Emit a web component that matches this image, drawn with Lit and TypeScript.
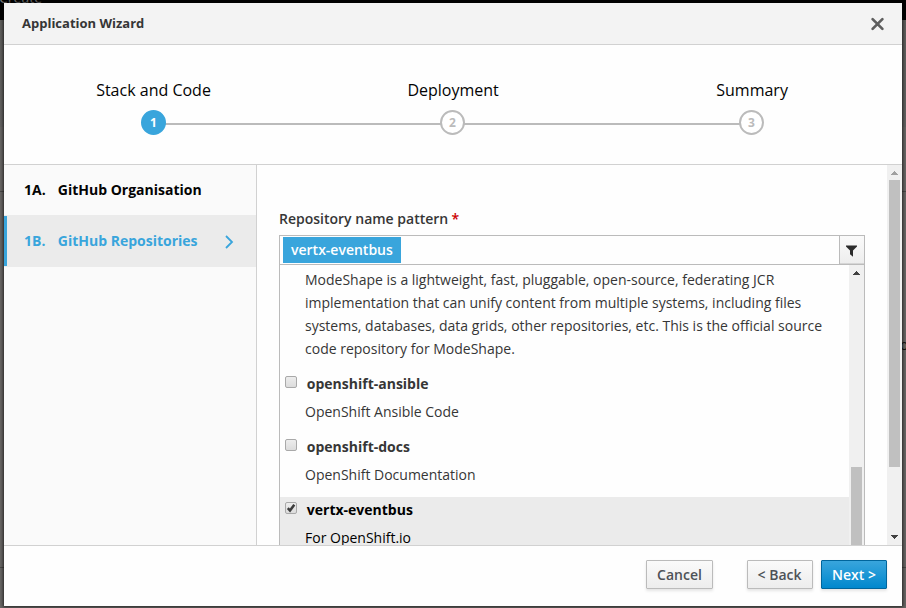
import { LitElement, html, css, svg } from "lit";
import { customElement, property } from "lit/decorators.js";
import { classMap } from "lit/directives/class-map.js";

const arrowUp = html`<svg width="7" height="4" viewBox="0 0 7 4" shape-rendering="crispEdges"><path fill="currentColor" d="M3 0h1v1h1v1h1v1h1v1H0V3h1V2h1V1h1z" /></svg>`;
const arrowDown = html`<svg width="7" height="4" viewBox="0 0 7 4" shape-rendering="crispEdges"><path fill="currentColor" d="M0 0h7v1H6v1H5v1H4v1H3V3H2V2H1V1H0z" /></svg>`;
const tick = svg`<path d="M2.8 6.2L5 8.6L9.3 2.8" fill="none" stroke="#3c3c3c" stroke-width="2.5" />`;

@customElement("wizard-step")
export class WizardStep extends LitElement {
  @property({ type: Number }) number = 1;
  @property() label = "";
  @property({ type: Boolean }) active = false;

  static styles = css`
    :host { display: flex; flex-direction: column; align-items: center; }
    .label { font-size: 16px; line-height: 24px; color: #030303; white-space: nowrap; }
    .label.pending { padding-left: 1.2px; }
    .circle {
      box-sizing: border-box; width: 25px; height: 25px; margin-top: 8px; z-index: 1;
      border: 2px solid #bbb; border-radius: 50%; background: #fff; color: #bbb;
      font-size: 12px; font-weight: 700; line-height: 21px; text-align: center;
    }
    .circle.active { background: #39a5dc; border-color: #39a5dc; color: #fff; }
  `;

  render() {
    return html`
      <span class=${classMap({ label: true, pending: !this.active })}>${this.label}</span>
      <span class=${classMap({ circle: true, active: this.active })}>${this.number}</span>
    `;
  }
}

@customElement("repo-item")
export class RepoItem extends LitElement {
  @property() name = "";
  @property() description = "";
  @property({ type: Boolean }) checked = false;

  static styles = css`
    :host { display: block; }
    .item { height: 63px; padding-left: 5px; box-sizing: border-box; color: #363636; }
    .item.checked { background: #ebebeb; color: #000; }
    .title { display: flex; gap: 9.8px; font-weight: 700; line-height: 26px; }
    .box {
      box-sizing: border-box; width: 12px; height: 12px; margin-top: 5px; border: 1px solid #a9a9a9;
      border-radius: 2px; background: linear-gradient(#ededed, #dcdcdc); flex: none;
    }
    .box svg { display: block; margin: -1px; }
    .text { padding: 3px 0 0 20px; line-height: 23px; }
  `;

  render() {
    return html`<div class=${classMap({ item: true, checked: this.checked })}>
      <div class="title">
        <span class="box"><svg width="12" height="12" viewBox="0 0 12 12">${this.checked ? tick : ""}</svg></span>
        <span>${this.name}</span>
      </div>
      <div class="text">${this.description}</div>
    </div>`;
  }
}

@customElement("app-root")
export class AppRoot extends LitElement {
  static styles = css`
    * { box-sizing: border-box; }
    :host {
      display: block; position: relative; width: 906px; height: 608px; overflow: hidden;
      font: 14px/23px "Open Sans", "Noto Sans", sans-serif; color: #363636;
      background: linear-gradient(#020202 20px, #5f5e5c 20px, #636261 127px, #686664 127px);
    }
    .behind { position: absolute; color: #777; line-height: 16px; }
    .create { left: -1px; top: -10px; font-size: 14px; }
    .edge { left: 900px; top: 337px; color: #111; }
    .rule { position: absolute; left: 0; width: 906px; height: 1px; background: #484746; }
    .rule.upper { top: 191px; }
    .rule.lower { top: 567px; }
    .modal {
      position: absolute; left: 4px; top: 3px; width: 898px; height: 603px;
      display: flex; flex-direction: column; background: #fefefe;
      box-shadow: 0 0 3px 1px rgba(0, 0, 0, 0.65);
    }
    .header {
      height: 42px; flex: none; display: flex; align-items: center; justify-content: space-between;
      padding: 0 17px 0 18px; background: #f3f3f3; border-bottom: 1px solid #d1d1d1;
      font-size: 13px; font-weight: 700;
    }
    .steps {
      height: 120px; flex: none; position: relative; border-bottom: 1px solid #d1d1d1;
      display: grid; grid-template-columns: repeat(3, 299px); padding-top: 33px; justify-content: start;
    }
    .steps wizard-step { position: relative; }
    .line { position: absolute; left: 149px; top: 78px; width: 598px; height: 2px; background: #bbb; }
    .body { height: 380px; flex: none; display: flex; overflow: hidden; }
    .side { width: 253px; flex: none; background: #fafafa; border-right: 1px solid #d1d1d1; }
    .nav { display: flex; align-items: center; font-weight: 700; color: #030303; padding: 0 0 2px 20px; height: 50px; }
    .nav .id { width: 33.8px; }
    .nav.current { height: 52px; background: #ebebeb; color: #39a5dc; padding: 0; }
    .nav.current .bar { width: 3px; height: 50px; background: #39a5dc; margin-right: 17px; }
    .nav.current .id, .nav.current .name { padding-bottom: 2px; }
    .nav.current .name { flex: 1; }
    .nav.current svg { margin: 2px 22.5px 0 0; }
    .main { flex: 1; padding: 42px 22px 0; }
    .label { font-weight: 600; line-height: 24px; margin-bottom: 4px; }
    .req { color: #cc0000; margin-left: -0.5px; }
    .input { display: flex; height: 30px; border: 1px solid #bbb; justify-content: space-between; }
    .tag { height: 26px; margin: 1px 0 0 3px; padding: 0 8px; background: #39a5dc; color: #fff; font-weight: 600; line-height: 26px; }
    .filter {
      width: 25px; display: flex; align-items: center; justify-content: center; border-left: 1px solid #bbb;
      padding: 1px 1px 0 0; background: linear-gradient(#fafafa, #ededed); box-shadow: inset 0 -1px #d5d5d5;
    }
    .list { display: flex; height: 281px; border: solid #bbb; border-width: 0 1px; overflow: hidden; }
    .rows { flex: 1; }
    .intro { padding: 3px 20px 11px 25px; white-space: nowrap; height: 106px; }
    .scroll { width: 15px; flex: none; background: #f0f0f0; display: flex; flex-direction: column; align-items: center; }
    .scroll svg { display: block; flex: none; }
    .inner { color: #404040; padding-top: 6px; }
    .inner .thumb { width: 11px; height: 90px; margin-top: 192px; background: #c0c0c0; flex: none; }
    .outer { height: 380px; padding: 6px 0; }
    .outer .up { color: #a0a0a0; }
    .outer .down { color: #404040; margin-top: auto; }
    .outer .thumb { width: 11px; height: 287px; margin-top: 5px; background: #c0c0c0; flex: none; }
    .footer {
      height: 61px; flex: none; border-top: 1px solid #d1d1d1; display: flex;
      justify-content: flex-end; padding: 14px 15px 0 0;
    }
    .btn {
      height: 29px; border: 1px solid #bbb; border-radius: 1px; color: #4d5258; font: inherit; font-weight: 600;
      line-height: 27px; padding: 0; width: 66px; margin-left: 8px; text-align: center;
      background: linear-gradient(#fafafa, #ededed); box-shadow: 0 2px 3px rgba(3, 3, 3, 0.1);
    }
    .btn.cancel { width: 67px; margin-right: 26px; }
    .btn.back { padding-right: 1px; }
    .btn.primary { color: #fff; border-color: #00659c; background: linear-gradient(#39a5dc, #0088ce); }
  `;

  render() {
    return html`
      <span class="behind create">Create</span>
      <span class="behind edge">o</span>
      <div class="rule upper"></div>
      <div class="rule lower"></div>
      <section class="modal">
        <header class="header">
          <span>Application Wizard</span>
          <svg width="15" height="14" viewBox="0 0 15 14"><path d="M2.6 2.1L12.4 11.9M12.4 2.1L2.6 11.9" stroke="#5e5e5e" stroke-width="2.7" stroke-linecap="round" /></svg>
        </header>
        <div class="steps">
          <div class="line"></div>
          <wizard-step number="1" label="Stack and Code" active></wizard-step>
          <wizard-step number="2" label="Deployment"></wizard-step>
          <wizard-step number="3" label="Summary"></wizard-step>
        </div>
        <div class="body">
          <nav class="side">
            <div class="nav"><span class="id">1A.</span><span>GitHub Organisation</span></div>
            <div class="nav current">
              <span class="bar"></span><span class="id">1B.</span><span class="name">GitHub Repositories</span>
              <svg width="10" height="14" viewBox="0 0 10 14"><path d="M2 1L8 7L2 13" fill="none" stroke="#39a5dc" stroke-width="1.8" /></svg>
            </div>
          </nav>
          <main class="main">
            <div class="label">Repository name pattern <span class="req">*</span></div>
            <div class="input">
              <span class="tag">vertx-eventbus</span>
              <span class="filter">
                <svg width="11" height="12" viewBox="0 0 11 12"><path d="M0 0.5H11V1.5L7 5.6V11.7L4 9.2V5.6L0 1.5Z" fill="#2b2b2b" /></svg>
              </span>
            </div>
            <div class="list">
              <div class="rows">
                <div class="intro">
                  ModeShape is a lightweight, fast, pluggable, open-source, federating JCR<br />
                  implementation that can unify content from multiple systems, including files<br />
                  systems, databases, data grids, other repositories, etc. This is the official source<br />
                  code repository for ModeShape.
                </div>
                <repo-item name="openshift-ansible" description="OpenShift Ansible Code"></repo-item>
                <repo-item name="openshift-docs" description="OpenShift Documentation"></repo-item>
                <repo-item name="vertx-eventbus" description="For OpenShift.io" checked></repo-item>
              </div>
              <div class="scroll inner">${arrowUp}<div class="thumb"></div></div>
            </div>
          </main>
          <div class="scroll outer">
            <span class="up">${arrowUp}</span>
            <div class="thumb"></div>
            <span class="down">${arrowDown}</span>
          </div>
        </div>
        <footer class="footer">
          <button class="btn cancel">Cancel</button>
          <button class="btn back">&lt; Back</button>
          <button class="btn primary">Next &gt;</button>
        </footer>
      </section>
    `;
  }
}
